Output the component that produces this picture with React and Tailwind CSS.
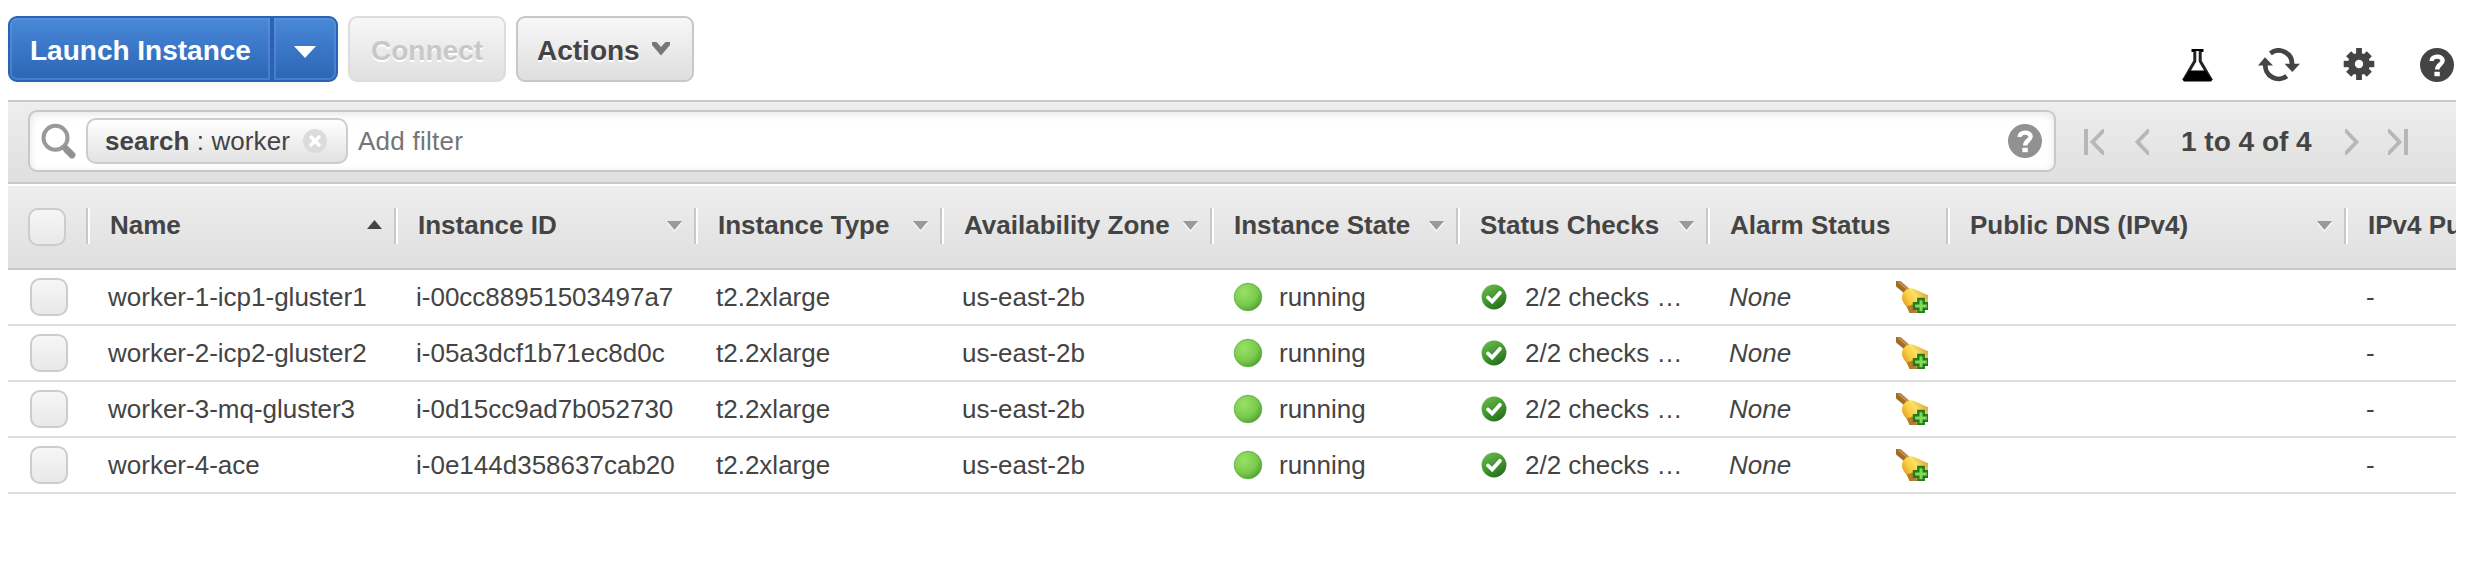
import React from "react";

const COLUMNS = [
  { label: "Name", width: "w-[308px]", sort: "asc" },
  { label: "Instance ID", width: "w-[300px]", sort: "none" },
  { label: "Instance Type", width: "w-[246px]", sort: "none" },
  { label: "Availability Zone", width: "w-[270px]", sort: "none" },
  { label: "Instance State", width: "w-[246px]", sort: "none" },
  { label: "Status Checks", width: "w-[250px]", sort: "none" },
  { label: "Alarm Status", width: "w-[240px]" },
  { label: "Public DNS (IPv4)", width: "w-[398px]", sort: "none" },
  { label: "IPv4 Public IP", width: "w-[260px]" },
];

const ROWS = [
  { name: "worker-1-icp1-gluster1", id: "i-00cc88951503497a7" },
  { name: "worker-2-icp2-gluster2", id: "i-05a3dcf1b71ec8d0c" },
  { name: "worker-3-mq-gluster3", id: "i-0d15cc9ad7b052730" },
  { name: "worker-4-ace", id: "i-0e144d358637cab20" },
];

function FlaskIcon() {
  return (
    <svg width="31" height="33" viewBox="0 0 31 33" className="shrink-0">
      <path d="M9.5 1.5H21.5" stroke="#000" strokeWidth="3" />
      <path d="M12.8 2V12L2.6 29.5H28.4L18.2 12V2" fill="#fff" stroke="#222" strokeWidth="3" />
      <path d="M7.5 21.5H23.5L29.8 30.5Q30.5 32.5 28.5 32.5H2.5Q0.5 32.5 1.2 30.5Z" fill="#000" />
    </svg>
  );
}

function RefreshIcon() {
  return (
    <svg width="42" height="34" viewBox="0 0 42 34" className="shrink-0">
      <g fill="none" stroke="#444" strokeWidth="4.8">
        <path d="M12.4 5.4A13.4 13.4 0 0 1 34 17" />
        <path d="M28.8 28.2A13.4 13.4 0 0 1 7.4 16" />
      </g>
      <path d="M26.6 15.8H42L34.3 24Z" fill="#444" />
      <path d="M0 17.4H15L7 9.2Z" fill="#444" />
    </svg>
  );
}

function GearIcon() {
  return (
    <svg width="32" height="32" viewBox="-16 -16 32 32" className="shrink-0">
      <g fill="#444">
        <rect x="-2.9" y="-16" width="5.8" height="32" />
        <rect x="-15.3" y="-3.2" width="30.6" height="6.4" />
        <rect x="-3.6" y="-14.6" width="7.2" height="29.2" transform="rotate(45)" />
        <rect x="-3.6" y="-14.6" width="7.2" height="29.2" transform="rotate(-45)" />
        <circle r="11" />
      </g>
      <circle r="4.2" fill="#fff" />
    </svg>
  );
}

function HelpIcon({ color }) {
  return (
    <svg width="34" height="34" viewBox="0 0 34 34" className="shrink-0">
      <circle cx="17" cy="17" r="17" fill={color} />
      <path d="M11.6 13C11.4 7.4 22.6 7.2 22.6 12.6C22.6 16.6 17.2 16.4 17.2 21.4" fill="none" stroke="#fff" strokeWidth="4.4" />
      <rect x="14.4" y="23.8" width="5.4" height="4.4" fill="#fff" />
    </svg>
  );
}

function SearchIcon() {
  return (
    <svg width="36" height="37" viewBox="0 0 36 37" className="shrink-0">
      <circle cx="14.5" cy="14.8" r="12" fill="none" stroke="#999" strokeWidth="4" />
      <path d="M23 23.5L32 33" stroke="#929292" strokeWidth="6" />
      <path d="M25.5 26.5L31 32" stroke="#929292" strokeWidth="6.8" strokeLinecap="round" />
    </svg>
  );
}

function PagerIcon({ bar, flip }) {
  return (
    <svg
      width={bar ? 20 : 15}
      height="26"
      viewBox={bar ? "0 0 20 26" : "5 0 15 26"}
      className={flip ? "shrink-0 -scale-x-100" : "shrink-0"}
    >
      {bar && <path d="M2 0V26" stroke="#b7b7b7" strokeWidth="4" />}
      <path d="M20.5 0.5L8.5 13L20.5 25.5" fill="none" stroke="#b7b7b7" strokeWidth="3.8" />
    </svg>
  );
}

function SortIcon({ direction }) {
  if (direction === "asc") {
    return (
      <svg width="15" height="9" viewBox="0 0 15 9" className="mb-[3px]">
        <path d="M7.5 0L15 9H0Z" fill="#444" />
      </svg>
    );
  }
  return (
    <svg width="15" height="11" viewBox="0 0 15 11" className="mt-px">
      <path d="M0 2H15L7.5 11Z" fill="#f8f8f8" />
      <path d="M0 0H15L7.5 9Z" fill="#999" />
    </svg>
  );
}

function RunningIcon() {
  return (
    <svg width="30" height="30" viewBox="0 0 30 30" className="shrink-0">
      <defs>
        <radialGradient id="running" cx="0.36" cy="0.32" r="0.75">
          <stop offset="0" stopColor="#98e266" />
          <stop offset="0.65" stopColor="#78c94a" />
          <stop offset="1" stopColor="#4a9c32" />
        </radialGradient>
      </defs>
      <circle cx="15" cy="15" r="13.8" fill="url(#running)" stroke="#5fae45" strokeWidth="0.8" />
    </svg>
  );
}

function CheckIcon() {
  return (
    <svg width="26" height="26" viewBox="0 0 26 26" className="shrink-0">
      <defs>
        <linearGradient id="check" x1="0.2" y1="0" x2="0.8" y2="1">
          <stop offset="0" stopColor="#6cb850" />
          <stop offset="0.5" stopColor="#43962f" />
          <stop offset="1" stopColor="#236b18" />
        </linearGradient>
      </defs>
      <circle cx="13" cy="13" r="12.4" fill="url(#check)" />
      <path d="M7 13.5L11.2 17.6L19 8.8" fill="none" stroke="#fff" strokeWidth="3.8" strokeLinecap="round" />
    </svg>
  );
}

function AlarmIcon() {
  return (
    <svg width="32" height="32" viewBox="0 0 32 32" className="shrink-0">
      <defs>
        <linearGradient id="bell" x1="0.1" y1="0.7" x2="0.9" y2="0.2">
          <stop offset="0" stopColor="#dfa02a" />
          <stop offset="0.3" stopColor="#f8cc3c" />
          <stop offset="0.6" stopColor="#fbe068" />
          <stop offset="1" stopColor="#e3ae3c" />
        </linearGradient>
      </defs>
      <path d="M0 0H4.5L13.5 8L9 13L0 5.5Z" fill="#a06c26" />
      <path d="M2.5 0.5L12 9" stroke="#c4924a" strokeWidth="2" />
      <path d="M6.5 13Q10 6.5 17 7.5L23 10Q29 13 32 14V21L20 32H13.5Q12 27 8 22.5Q5 18 6.5 13Z" fill="url(#bell)" />
      <path d="M11 25.5L18.5 23L21 32H13.5Z" fill="#b27c30" />
      <path d="M22.3 18H27.7V22.3H32V27.7H27.7V31.4H22.3V27.7H18V22.3H22.3Z" fill="#7edb55" stroke="#257a1c" strokeWidth="2.4" />
    </svg>
  );
}

function Checkbox() {
  return (
    <span className="block size-[38px] shrink-0 rounded-[10px] border-2 border-[#ccc] bg-linear-to-b from-[#f6f6f6] to-[#e9e9e9]" />
  );
}

function ActionBar() {
  return (
    <div className="flex h-[100px] items-start justify-between pl-2 pr-5 pt-4">
      <div className="flex h-[66px] text-[28px] font-bold">
        <div className="flex rounded-[9px] border-2 border-[#2a63b4] bg-linear-to-b from-[#4a88d8] to-[#2b65b6] text-white [text-shadow:0_2px_0_#2453a0]">
          <button className="w-[260px] rounded-l-[7px] border-2 border-[#6496d8]/50 pl-[18px] pt-1 text-left">Launch Instance</button>
          <button className="ml-1 flex w-[62px] items-center justify-center rounded-r-[7px] border-2 border-[#6496d8]/50 shadow-[-4px_0_0_#2a63b4]">
            <svg width="22" height="12" viewBox="0 0 22 12" className="mt-1.5">
              <path d="M0 0H22L11 12Z" fill="#fff" />
            </svg>
          </button>
        </div>
        <button className="ml-2.5 w-[158px] rounded-[9px] border-2 border-[#ddd] bg-linear-to-b from-[#f7f7f7] to-[#e0e0e0] pt-1 text-[#c8c8c8] [text-shadow:0_2px_0_#fff]">
          Connect
        </button>
        <button className="ml-2.5 flex w-[178px] items-center rounded-[9px] border-2 border-[#c8c8c8] bg-linear-to-b from-[#f7f7f7] to-[#dfdfdf] pl-[19px] text-[#444] [text-shadow:0_2px_0_#fff]">
          <span className="pt-1">Actions</span>
          <svg width="18" height="14" viewBox="0 0 18 14" className="ml-3">
            <path d="M0 0H4.5L9 5L13.5 0H18V3L9 13.5L0 3Z" fill="#777" />
          </svg>
        </button>
      </div>
      <div className="flex h-[66px] items-end">
        <FlaskIcon />
        <span className="ml-[45px] flex"><RefreshIcon /></span>
        <span className="mb-0.5 ml-[43px] flex"><GearIcon /></span>
        <span className="ml-[45px] flex"><HelpIcon color="#444" /></span>
      </div>
    </div>
  );
}

function FilterBar() {
  return (
    <div className="flex h-[84px] items-center border-y-2 border-[#c8c8c8] bg-linear-to-b from-[#eee] to-[#dfdfdf] pl-5">
      <div className="mb-0.5 flex h-[62px] w-[2028px] items-center rounded-[9px] border-2 border-[#c8c8c8] bg-white pl-[11px] pr-3 shadow-[inset_0_2px_8px_#e4e4e4]">
        <SearchIcon />
        <div className="ml-[9px] flex h-[46px] w-[262px] items-center rounded-[10px] border-2 border-[#ccc] bg-linear-to-b from-white to-[#e2e2e2] pl-[17px]">
          <span className="tracking-[0.1px]"><b>search</b> : worker</span>
          <svg width="24" height="24" viewBox="0 0 24 24" className="ml-[13px]">
            <circle cx="12" cy="12" r="12" fill="#dcdcdc" />
            <path d="M7 7L17 17M17 7L7 17" stroke="#fff" strokeWidth="3.4" />
          </svg>
        </div>
        <span className="ml-2.5 grow tracking-[0.25px] text-[#757575]">Add filter</span>
        <HelpIcon color="#919191" />
      </div>
      <div className="ml-7 flex items-center">
        <PagerIcon bar />
        <span className="ml-[30px] flex"><PagerIcon /></span>
        <span className="ml-8 w-[164px] text-[28px] font-bold">1 to 4 of 4</span>
        <PagerIcon flip />
        <span className="ml-7 flex"><PagerIcon bar flip /></span>
      </div>
    </div>
  );
}

function TableHeader() {
  return (
    <div className="mt-0.5 flex h-[84px] overflow-hidden border-b-2 border-[#c8c8c8] bg-linear-to-b from-[#eee] to-[#dfdfdf] pt-[22px] font-bold">
      <div className="w-[78px] shrink-0 pl-5"><Checkbox /></div>
      {COLUMNS.map((c) => (
        <div key={c.label} className={`${c.width} flex h-9 shrink-0 items-center justify-between border-l-2 border-[#c8c8c8] pr-3 shadow-[inset_2px_0_0_#fff]`}>
          <span className="whitespace-nowrap pb-0.5 pl-[22px]">{c.label}</span>
          {c.sort && <SortIcon direction={c.sort} />}
        </div>
      ))}
    </div>
  );
}

function TableRow({ row }) {
  return (
    <div className="flex h-14 items-center overflow-hidden whitespace-nowrap border-b-2 border-[#ddd]">
      <div className="w-[100px] shrink-0 pl-[22px]"><Checkbox /></div>
      <div className="w-[308px] shrink-0">{row.name}</div>
      <div className="w-[300px] shrink-0">{row.id}</div>
      <div className="w-[246px] shrink-0">t2.2xlarge</div>
      <div className="w-[271px] shrink-0">us-east-2b</div>
      <div className="flex w-[248px] shrink-0 items-center"><RunningIcon /><span className="ml-4">running</span></div>
      <div className="flex w-[248px] shrink-0 items-center"><CheckIcon /><span className="ml-[18px]">2/2 checks …</span></div>
      <div className="w-[167px] shrink-0 italic">None</div>
      <div className="w-[470px] shrink-0"><AlarmIcon /></div>
      <div>-</div>
    </div>
  );
}

export default function App() {
  return (
    <div className="h-[580px] w-[2474px] overflow-hidden bg-white font-['Liberation_Sans',Arial,sans-serif] text-[26px] leading-8 text-[#444]">
      <ActionBar />
      <div className="ml-2 w-[2448px]">
        <FilterBar />
        <TableHeader />
        {ROWS.map((row) => <TableRow key={row.id} row={row} />)}
      </div>
    </div>
  );
}
